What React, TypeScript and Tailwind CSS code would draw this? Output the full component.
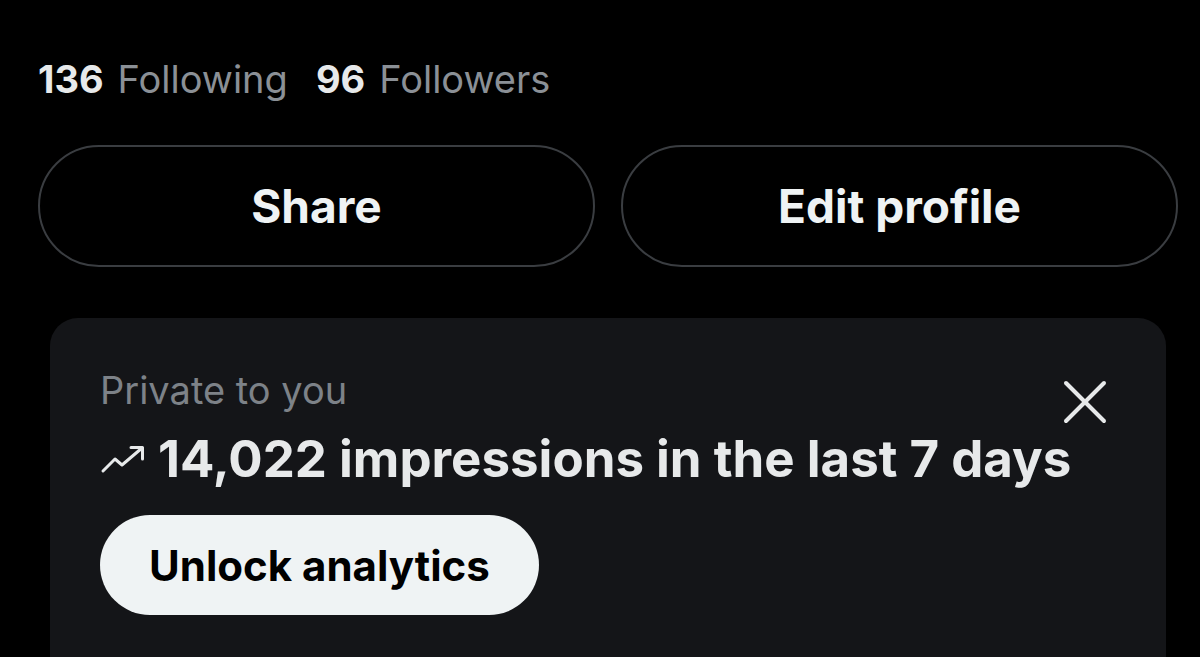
const TrendIcon = () => (
    <svg width="46" height="30" viewBox="0 0 46 30" className="shrink-0" fill="none" stroke="#e7e9ea" strokeWidth={3} strokeLinecap="round" strokeLinejoin="round">
        <path d="M3 27 L15 15 L22 21 L42 4" />
        <path d="M31 3.5 H42.5 V15" />
    </svg>
);

const CloseIcon = () => (
    <svg width="44" height="44" viewBox="0 0 44 44" className="shrink-0" fill="none" stroke="#e7e9ea" strokeWidth={4} strokeLinecap="round">
        <path d="M3 3 L41 41" />
        <path d="M41 3 L3 41" />
    </svg>
);

const App = () => {
    return (
        <div className="w-[1200px] h-[657px] overflow-hidden bg-black text-[#e7e9ea] font-['Inter',sans-serif]">
            {/* Stats */}
            <div className="flex items-baseline pt-[55px] pl-[38px] text-[38px] leading-[48px]">
                <span className="font-bold">136</span>
                <span className="ml-[14px] text-[#8b9096]">Following</span>
                <span className="ml-[28px] font-bold">96</span>
                <span className="ml-[14px] text-[#8b9096]">Followers</span>
            </div>

            {/* Buttons */}
            <div className="flex gap-[26px] pl-[38px] pr-[22px] mt-[42px]">
                <button className="flex-1 h-[122px] rounded-full border-2 border-[#3a3d41] text-[46px] font-bold text-[#eff3f4]">
                    Share
                </button>
                <button className="flex-1 h-[122px] rounded-full border-2 border-[#3a3d41] text-[46px] font-bold text-[#eff3f4]">
                    Edit profile
                </button>
            </div>

            {/* Private analytics card */}
            <div className="ml-[50px] mr-[34px] mt-[51px] h-[400px] rounded-[28px] bg-[#141518] pl-[50px] pr-[58px] pt-[48px]">
                <div className="flex items-start justify-between">
                    <div className="text-[38px] leading-[48px] text-[#7d8288]">Private to you</div>
                    <div className="mt-[14px] mr-[1px]">
                        <CloseIcon />
                    </div>
                </div>
                <div className="flex items-center gap-[12px] mt-[4px] whitespace-nowrap">
                    <TrendIcon />
                    <span className="text-[51px] leading-[62px] font-bold">
                        14,022 impressions in the last 7 days
                    </span>
                </div>
                <button className="mt-[25px] h-[100px] px-[49px] rounded-full bg-[#eff3f4] text-black text-[42px] font-bold">
                    Unlock analytics
                </button>
            </div>
        </div>
    );
};

export default App;
